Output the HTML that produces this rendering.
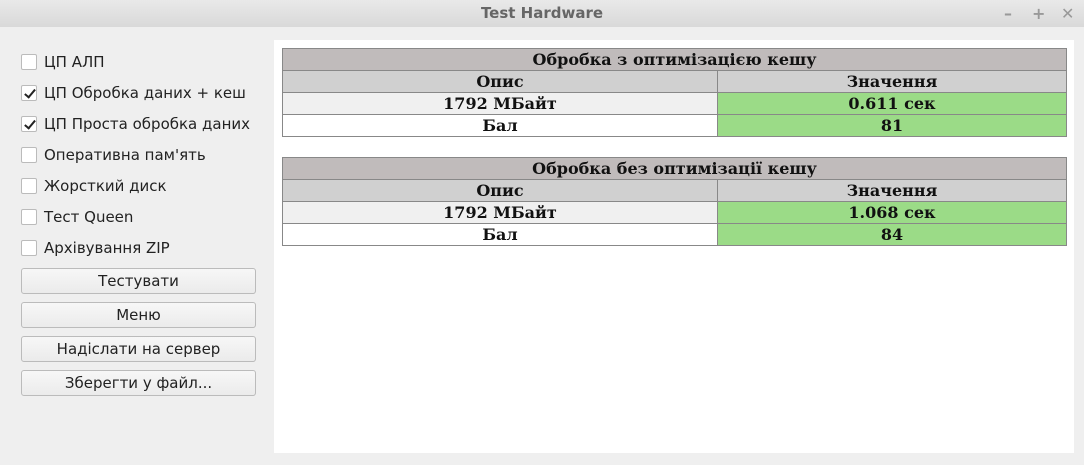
<!DOCTYPE html>
<html><head><meta charset="utf-8"><style>
*{margin:0;padding:0;box-sizing:border-box}
body{width:1084px;height:465px;background:#efefef;position:relative;overflow:hidden;font-family:"DejaVu Sans","Liberation Sans",sans-serif;font-size:15px;color:#222}
.title{position:absolute;left:0;top:0;width:1084px;height:27px;background:linear-gradient(#e9e9e9,#d9d9d9);text-align:center;font-weight:bold;font-size:15px;color:#666;line-height:27px}
.wb{position:absolute;top:0;line-height:27px;color:#999;font-weight:bold;font-size:16px}
.cb{position:absolute;left:21px;width:16px;height:16px;border:1px solid #bbb;background:#fff;border-radius:2px}
.cb.on::after{content:"";position:absolute;left:5px;top:1px;width:4px;height:9px;border:solid #222;border-width:0 2.5px 2.5px 0;transform:rotate(40deg)}
.lbl{position:absolute;left:44px;line-height:18px;margin-top:-1px}
.btn{position:absolute;left:21px;width:235px;height:26px;border:1px solid #bbb;border-radius:3px;background:linear-gradient(#f7f7f7,#ebebeb);text-align:center;line-height:24px}
.panel{position:absolute;left:274px;top:40px;width:800px;height:413px;background:#fff}
table{position:absolute;left:282px;width:785px;border-collapse:collapse;font-family:"DejaVu Serif","Liberation Serif",serif;font-weight:bold;font-size:16px;color:#111}
td{border:1px solid #888;text-align:center;height:22px;line-height:20px;padding:1px 0 0 0}
.h{background:#c0bbbb}.s{background:#d0d0d0}.g{background:#9bdb87}.l{background:#f0f0f0}
</style></head><body>
<div class="title">Test Hardware</div>
<div class="wb" style="left:1004px">–</div><div class="wb" style="left:1032px">+</div><div class="wb" style="left:1061px">✕</div>
<div class="cb" style="top:54px"></div><div class="lbl" style="top:54px">ЦП АЛП</div>
<div class="cb on" style="top:85px"></div><div class="lbl" style="top:85px">ЦП Обробка даних + кеш</div>
<div class="cb on" style="top:116px"></div><div class="lbl" style="top:116px">ЦП Проста обробка даних</div>
<div class="cb" style="top:147px"></div><div class="lbl" style="top:147px">Оперативна пам'ять</div>
<div class="cb" style="top:178px"></div><div class="lbl" style="top:178px">Жорсткий диск</div>
<div class="cb" style="top:209px"></div><div class="lbl" style="top:209px">Тест Queen</div>
<div class="cb" style="top:240px"></div><div class="lbl" style="top:240px">Архівування ZIP</div>
<div class="btn" style="top:268px">Тестувати</div>
<div class="btn" style="top:302px">Меню</div>
<div class="btn" style="top:336px">Надіслати на сервер</div>
<div class="btn" style="top:370px">Зберегти у файл...</div>
<div class="panel"></div>
<table style="top:48px">
<tr><td colspan="2" class="h">Обробка з оптимізацією кешу</td></tr>
<tr><td class="s" style="width:435px">Опис</td><td class="s">Значення</td></tr>
<tr><td class="l">1792 МБайт</td><td class="g">0.611 сек</td></tr>
<tr><td>Бал</td><td class="g">81</td></tr>
</table>
<table style="top:157px">
<tr><td colspan="2" class="h">Обробка без оптимізації кешу</td></tr>
<tr><td class="s" style="width:435px">Опис</td><td class="s">Значення</td></tr>
<tr><td class="l">1792 МБайт</td><td class="g">1.068 сек</td></tr>
<tr><td>Бал</td><td class="g">84</td></tr>
</table>
</body></html>
